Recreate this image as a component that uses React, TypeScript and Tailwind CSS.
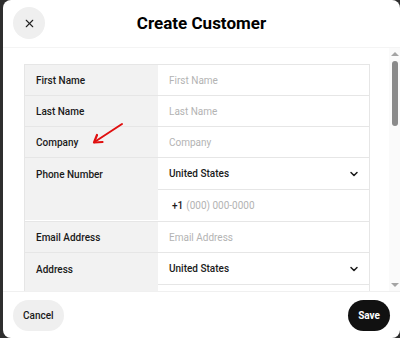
import { ChevronDown, X } from "lucide-react";

const font = { fontFamily: "Roboto, Inter, 'Noto Sans', sans-serif" };

function TextRow({ label, placeholder }: { label: string; placeholder: string }) {
  return (
    <div className="flex h-[31px] border-b border-[#e6e6e6]">
      <div className="w-[133px] shrink-0 bg-[#f2f2f2] flex items-center pl-[11px] text-[10px] font-medium text-[#1a1a1a]">
        {label}
      </div>
      <div className="flex-1 flex items-center pl-[11px] text-[10px] text-[#b3b3b3]">{placeholder}</div>
    </div>
  );
}

function SelectLine() {
  return (
    <div className="h-[31px] flex items-center justify-between pl-[11px] pr-[9px] text-[10px] font-medium text-[#1a1a1a]">
      <span>United States</span>
      <ChevronDown size={12} strokeWidth={3} />
    </div>
  );
}

export default function App() {
  return (
    <div className="w-[400px] h-[338px] bg-[#2e2e2e] pl-[3px] overflow-hidden" style={font}>
      <div className="h-full bg-white rounded-lg flex flex-col overflow-hidden">
        <header className="relative h-[48px] shrink-0 flex items-center justify-center border-b border-[#f4f4f4]">
          <button className="absolute left-[10px] top-[7px] w-8 h-8 rounded-full bg-[#efefef] flex items-center justify-center text-[#222]">
            <X size={13} strokeWidth={2} />
          </button>
          <h1 className="text-[17px] font-bold text-black pt-[1px]">Create Customer</h1>
        </header>

        <div className="flex-1 flex min-h-0">
          <div className="flex-1 overflow-hidden pl-[21px] pr-[19px] pt-[16px] relative">
            <div className="border-t border-l border-r border-[#e6e6e6]">
              <TextRow label="First Name" placeholder="First Name" />
              <TextRow label="Last Name" placeholder="Last Name" />
              <TextRow label="Company" placeholder="Company" />
              <div className="flex border-b border-[#e6e6e6]">
                <div className="w-[133px] shrink-0 bg-[#f2f2f2] h-[62px] pl-[11px] pt-[9px] text-[10px] font-medium text-[#1a1a1a]">
                  Phone Number
                </div>
                <div className="flex-1">
                  <div className="border-b border-[#e6e6e6]">
                    <SelectLine />
                  </div>
                  <div className="h-[31px] flex items-center pl-[14px] text-[10px]">
                    <span className="font-medium text-[#1a1a1a] mr-[3px]">+1</span>
                    <span className="text-[#b3b3b3]">(000) 000-0000</span>
                  </div>
                </div>
              </div>
              <TextRow label="Email Address" placeholder="Email Address" />
              <div className="flex">
                <div className="w-[133px] shrink-0 bg-[#f2f2f2] h-[62px] pl-[11px] pt-[9px] text-[10px] font-medium text-[#1a1a1a]">
                  Address
                </div>
                <div className="flex-1">
                  <div className="border-b border-[#e6e6e6]">
                    <SelectLine />
                  </div>
                </div>
              </div>
            </div>
            <svg className="absolute left-[88px] top-[74px]" width="34" height="24" viewBox="0 0 34 24">
              <path d="M31 2 L5 19" stroke="#e01010" strokeWidth="2" strokeLinecap="round" fill="none" />
              <path d="M3 20.5 L6 13 M3 20.5 L11.5 20" stroke="#e01010" strokeWidth="2.2" strokeLinecap="round" fill="none" />
            </svg>
          </div>
          <div className="w-[11px] shrink-0 bg-[#fafafa] flex flex-col items-center py-[2px]">
            <div className="w-0 h-0 border-l-[4px] border-r-[4px] border-b-[4px] border-l-transparent border-r-transparent border-b-[#a3a3a3] mt-[2px]" />
            <div className="w-[6px] h-[65px] rounded-full bg-[#8a8a8a] mt-[5px]" />
            <div className="flex-1" />
            <div className="w-0 h-0 border-l-[4px] border-r-[4px] border-t-[4px] border-l-transparent border-r-transparent border-t-[#a3a3a3] mb-[2px]" />
          </div>
        </div>

        <footer className="h-[47px] shrink-0 border-t border-[#f0f0f0] flex items-center justify-between px-[10px]">
          <button className="h-[31px] px-[10px] rounded-full bg-[#efefef] text-[10px] font-medium text-[#1a1a1a]">
            Cancel
          </button>
          <button className="h-[31px] px-[10px] rounded-full bg-[#111] text-[10px] font-bold text-white">
            Save
          </button>
        </footer>
      </div>
    </div>
  );
}
